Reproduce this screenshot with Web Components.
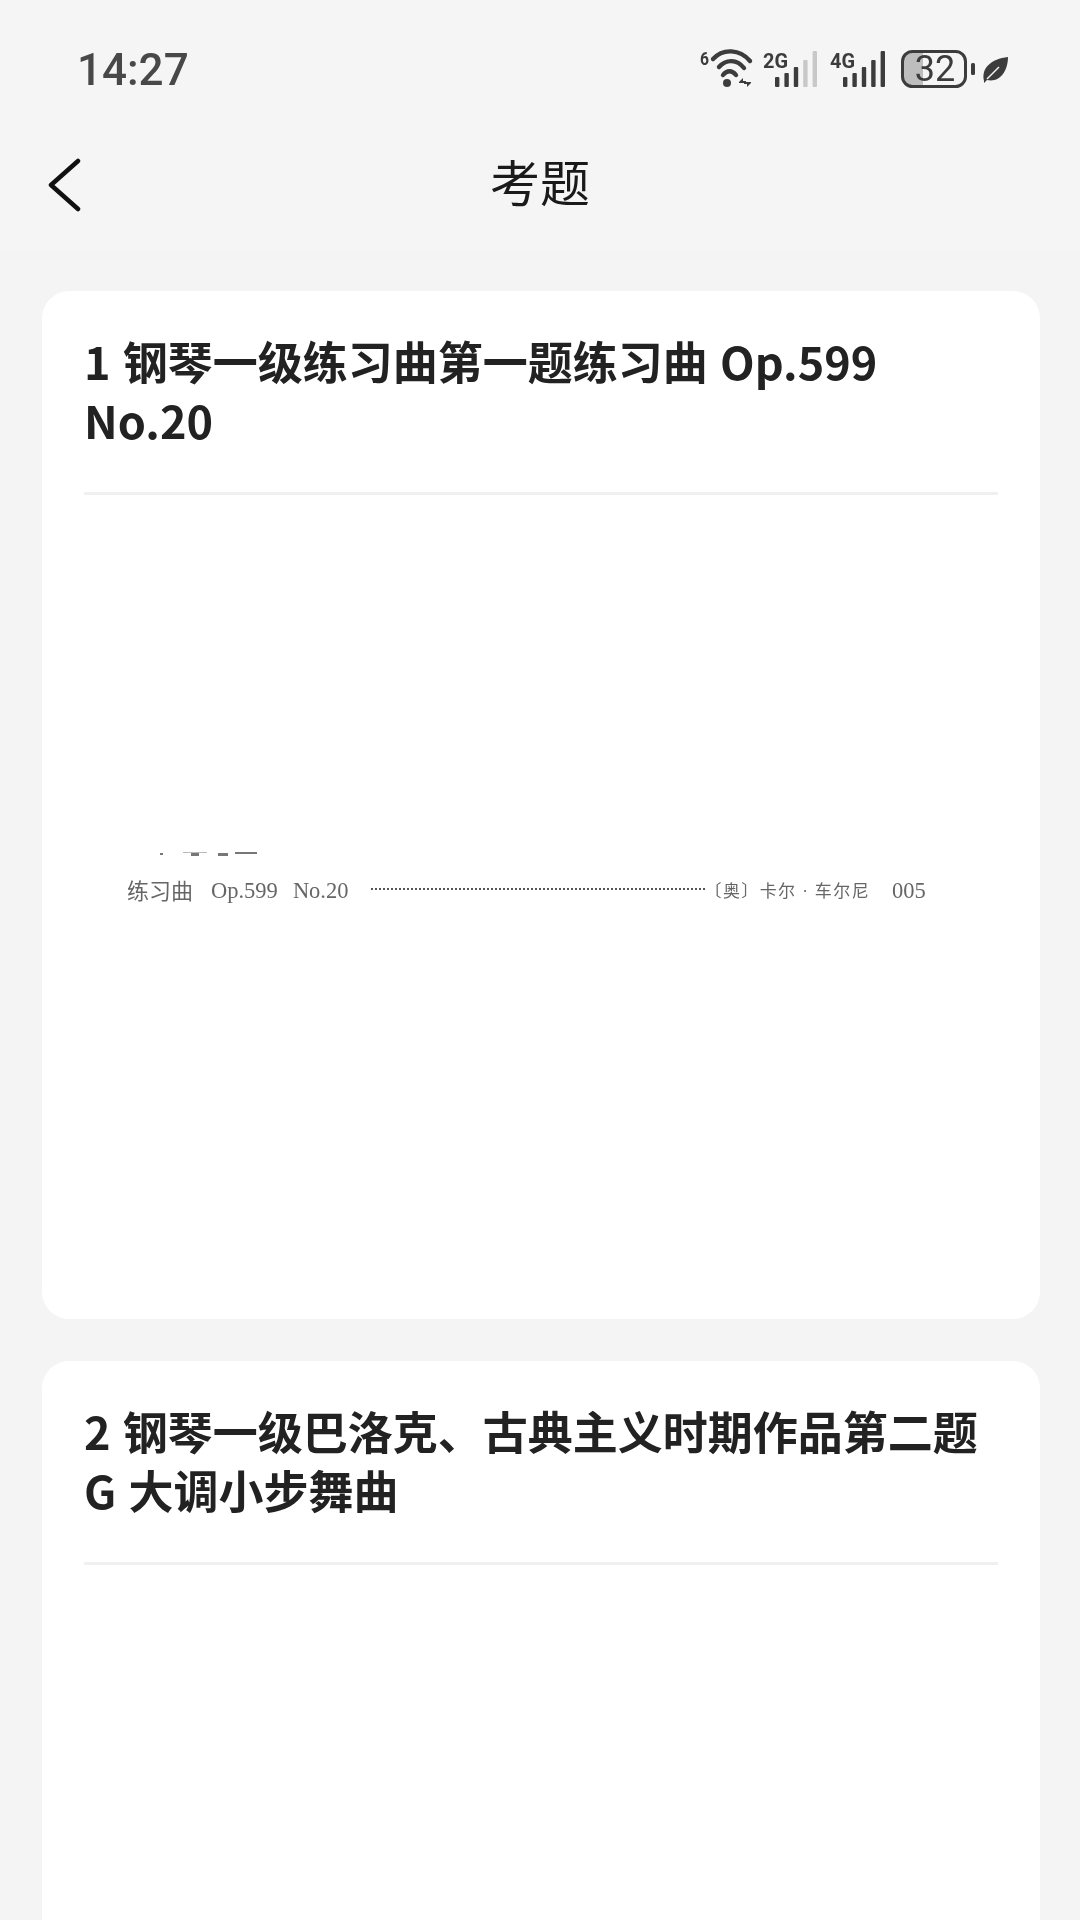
<!DOCTYPE html>
<html lang="zh">
<head>
<meta charset="utf-8">
<title>考题</title>
<style>
  html, body { margin: 0; padding: 0; }
  body {
    width: 1080px;
    height: 1920px;
    overflow: hidden;
    background: #f4f4f4;
    font-family: "Noto Sans CJK SC", "Noto Sans", sans-serif;
  }
</style>
</head>
<body>
<app-header heading="考题" time="14:27"></app-header>
<card-list>
  <exam-card heading="1 钢琴一级练习曲第一题练习曲 Op.599 No.20">
    <toc-line></toc-line>
  </exam-card>
  <exam-card heading="2 钢琴一级巴洛克、古典主义时期作品第二题 G 大调小步舞曲"></exam-card>
</card-list>

<script>
class StatusIcons extends HTMLElement {
  constructor() {
    super()
    this.shadow = this.attachShadow({ mode: 'open' })
  }

  bars(x, lit) {
    const tops = [77, 73, 67, 60, 51]
    return tops.map((top, i) => {
      const fill = i < lit ? '#3c3c3c' : '#c8c8c8'
      return `<rect x="${x + i * 9.4}" y="${top - 40}" width="4.4" height="${87 - top}" rx="1" fill="${fill}"/>`
    }).join('')
  }

  connectedCallback() {
    this.shadow.innerHTML = `
    <style>
      :host { display: block; width: 320px; height: 60px; margin-right: 72px; filter: blur(0.5px); }
      svg { display: block; }
      text { font-family: "Roboto", sans-serif; fill: #3c3c3c; }
    </style>
    <svg width="320" height="60" viewBox="0 0 320 60">
      <!-- wifi -->
      <text x="12" y="25" font-size="19" font-weight="700" textLength="9" lengthAdjust="spacingAndGlyphs">6</text>
      <g fill="none" stroke="#3c3c3c" stroke-width="4.4" stroke-linecap="round">
        <path d="M25 19 C35 8 52 9 62 21"/>
        <path d="M31 27 C38 19 49 19 56 28"/>
        <path d="M35 35 C39 30 44 30 48 35"/>
      </g>
      <circle cx="39" cy="43" r="4" fill="#3c3c3c"/>
      <path d="M51 42 l4 -4 v3 h3 v2 h-7z M63 43 l-4 4 v-3 h-3 v-2 h7z" fill="#3c3c3c"/>
      <!-- 2G -->
      <text x="75" y="28" font-size="20" font-weight="700" textLength="25" lengthAdjust="spacingAndGlyphs">2G</text>
      ${this.bars(87, 3)}
      <!-- 4G -->
      <text x="142" y="28" font-size="20" font-weight="700" textLength="25" lengthAdjust="spacingAndGlyphs">4G</text>
      ${this.bars(155, 5)}
      <!-- battery -->
      <path d="M224 12 h11 v34 h-11 a9 9 0 0 1 -9 -9 v-16 a9 9 0 0 1 9 -9z" fill="#bdbdbd"/>
      <rect x="214.5" y="11.5" width="63" height="35" rx="10" fill="none" stroke="#3c3c3c" stroke-width="3"/>
      <text x="247" y="41" font-size="36" text-anchor="middle" style="font-weight:400">32</text>
      <rect x="283" y="23" width="4" height="12" rx="1.5" fill="#3c3c3c"/>
      <!-- leaf -->
      <path d="M296 41 C293 28 303 19 320 17 C320 32 311 43 299 40 L296 43 Z" fill="#3c3c3c"/>
      <path d="M299 39 L311 27" stroke="#f6f5f6" stroke-width="1.5" fill="none"/>
    </svg>
    `
  }
}

class AppHeader extends HTMLElement {
  constructor() {
    super()
    this.shadow = this.attachShadow({ mode: 'open' })
  }

  connectedCallback() {
    this.shadow.innerHTML = `
    <style>
      :host { display: block; height: 250px; background: #f6f5f6; }
      .status {
        height: 140px;
        box-sizing: border-box;
        padding: 40px 0 0 77px;
        display: flex;
        justify-content: space-between;
        align-items: flex-start;
      }
      .time {
        font-family: "Roboto", sans-serif;
        font-weight: 500;
        font-size: 44px;
        line-height: 60px;
        color: #484848;
        filter: blur(0.5px);
      }
      .nav {
        height: 84px;
        position: relative;
        display: flex;
        align-items: center;
        justify-content: center;
      }
      .back { position: absolute; left: 48px; top: 18px; }
      h1 {
        margin: 0 0 4px;
        font-size: 50px;
        font-weight: 400;
        line-height: 80px;
        color: #1a1a1a;
        filter: blur(0.4px);
      }
    </style>
    <div class="status">
      <span class="time">${this.getAttribute('time')}</span>
      <status-icons></status-icons>
    </div>
    <div class="nav">
      <svg class="back" width="36" height="56" viewBox="0 0 36 56">
        <path d="M30 3 L3 27 L30 51" fill="none" stroke="#111" stroke-width="4.5" stroke-linecap="round" stroke-linejoin="round"/>
      </svg>
      <h1>${this.getAttribute('heading')}</h1>
    </div>
    `
  }
}

class CardList extends HTMLElement {
  constructor() {
    super()
    this.shadow = this.attachShadow({ mode: 'open' })
    this.shadow.innerHTML = `
    <style>
      :host {
        display: flex;
        flex-direction: column;
        gap: 42px;
        height: 1670px;
        box-sizing: border-box;
        overflow: hidden;
        padding: 41px 40px 0 42px;
      }
    </style>
    <slot></slot>
    `
  }
}

class ExamCard extends HTMLElement {
  constructor() {
    super()
    this.shadow = this.attachShadow({ mode: 'open' })
  }

  connectedCallback() {
    this.shadow.innerHTML = `
    <style>
      :host {
        display: block;
        height: 1028px;
        flex: none;
        box-sizing: border-box;
        padding: 40px 42px 0;
        background: #fff;
        border-radius: 27px;
      }
      .rule { height: 3px; background: #f0f0f0; margin-top: 43px; }
      h2 {
        margin: 0;
        font-size: 45px;
        font-weight: 700;
        word-spacing: 2px;
        line-height: 59px;
        color: #222;
        filter: blur(0.35px);
      }
      .body { padding-top: 356px; }
    </style>
    <h2>${this.getAttribute('heading')}</h2>
    <div class="rule"></div>
    <div class="body"><slot></slot></div>
    `
  }
}

class TocLine extends HTMLElement {
  constructor() {
    super()
    this.shadow = this.attachShadow({ mode: 'open' })
  }

  connectedCallback() {
    this.shadow.innerHTML = `
    <style>
      :host {
        display: block;
        margin-left: 43px;
        width: 820px;
        color: #666;
        font-family: "Liberation Serif", "Noto Sans CJK SC", serif;
        font-size: 22.5px;
        white-space: nowrap;
        filter: blur(0.5px);
      }
      .cut { display: block; margin-bottom: 16px; }
      .row { display: flex; align-items: center; height: 32px; }
      .title { width: 67px; font-size: 22px; }
      .op { margin-left: 17px; padding-top: 3px; }
      .no { margin-left: 15px; padding-top: 3px; }
      .dots {
        width: 334px;
        margin: 0 0 0 22px;
        border-top: 2px dotted #555;
      }
      .who { font-size: 17px; letter-spacing: 1.4px; }
      .page { margin-left: 22px; padding-top: 3px; }
    </style>
    <svg class="cut" width="140" height="6" viewBox="0 0 140 6" fill="#777">
      <rect x="33" y="2" width="3" height="2"/>
      <rect x="56" y="1" width="24" height="1" fill="#bbb"/>
      <rect x="64" y="2" width="8" height="3"/>
      <rect x="91" y="2" width="10" height="3"/>
      <rect x="108" y="1" width="22" height="2"/>
    </svg>
    <div class="row">
      <span class="title">练习曲</span><span class="op">Op.599</span><span class="no">No.20</span>
      <span class="dots"></span>
      <span class="who">〔奥〕卡尔 · 车尔尼</span>
      <span class="page">005</span>
    </div>
    `
  }
}

customElements.define('status-icons', StatusIcons)
customElements.define('app-header', AppHeader)
customElements.define('card-list', CardList)
customElements.define('exam-card', ExamCard)
customElements.define('toc-line', TocLine)
</script>
</body>
</html>
